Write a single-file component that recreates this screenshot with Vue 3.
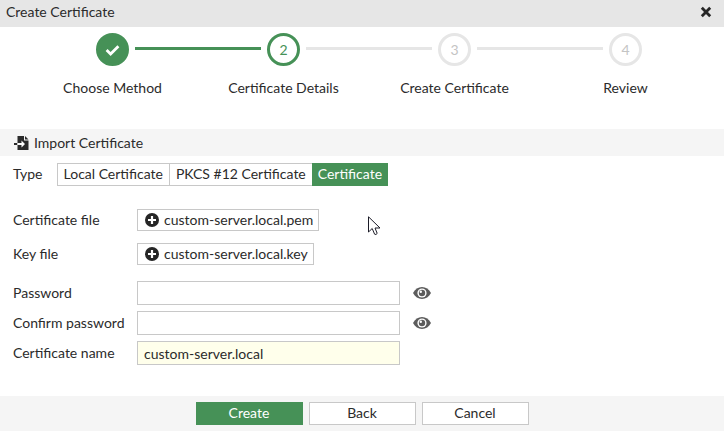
<script setup>
import { ref } from 'vue'

const steps = [
  { label: 'Choose Method', state: 'done' },
  { label: 'Certificate Details', state: 'active' },
  { label: 'Create Certificate', state: 'pending' },
  { label: 'Review', state: 'pending' },
]

const types = ['Local Certificate', 'PKCS #12 Certificate', 'Certificate']
const selectedType = ref('Certificate')

const files = [
  { id: 'cert-file', label: 'Certificate file', name: 'custom-server.local.pem' },
  { id: 'key-file', label: 'Key file', name: 'custom-server.local.key' },
]

const passwords = ref([
  { id: 'password', label: 'Password', value: '', shown: false },
  { id: 'confirm-password', label: 'Confirm password', value: '', shown: false },
])

const certName = ref('custom-server.local')
</script>

<template>
  <div class="dialog">
    <header class="titlebar">
      <h1>Create Certificate</h1>
      <button type="button" class="close" aria-label="Close">
        <svg viewBox="0 0 12 12" width="12" height="12" aria-hidden="true">
          <path d="M1.8 1.8 10.2 10.2M10.2 1.8 1.8 10.2" fill="none" stroke="#262626" stroke-width="2.8" />
        </svg>
      </button>
    </header>

    <ol class="stepper">
      <li v-for="(step, i) in steps" :key="step.label" class="step" :class="step.state">
        <div class="track">
          <span class="line" :class="{ hidden: i === 0, reached: step.state === 'active' }"></span>
          <span class="circle">
            <svg v-if="step.state === 'done'" viewBox="0 0 15 12" width="15" height="12" aria-hidden="true">
              <path d="M1.6 6 5.6 10 13.4 2.2" fill="none" stroke="#fff" stroke-width="2.8" />
            </svg>
            <template v-else>{{ i + 1 }}</template>
          </span>
          <span class="line" :class="{ hidden: i === steps.length - 1, reached: step.state === 'done' }"></span>
        </div>
        <span class="step-label">{{ step.label }}</span>
      </li>
    </ol>

    <h2 class="section">
      <svg viewBox="0 0 15 14" width="15" height="14" aria-hidden="true">
        <path d="M3.5 0H10V4.5H14.5V14H3.5Z" fill="#2b2b2b" />
        <path d="M11 0 14.5 3.6H11Z" fill="#2b2b2b" />
        <path d="M0 7H3V9H0Z" fill="#2b2b2b" />
        <path d="M3.5 7H7.5V4.6L11 8 7.5 11.4V9H3.5Z" fill="#fff" />
      </svg>
      Import Certificate
    </h2>

    <form class="form" @submit.prevent>
      <div class="type-row">
        <span id="type-label">Type</span>
        <div class="segments" role="group" aria-labelledby="type-label">
          <button
            v-for="type in types"
            :key="type"
            type="button"
            :class="{ selected: type === selectedType }"
            :aria-pressed="type === selectedType"
            @click="selectedType = type"
          >{{ type }}</button>
        </div>
      </div>

      <div class="files">
        <div v-for="file in files" :key="file.id" class="row">
          <label :for="file.id">{{ file.label }}</label>
          <button :id="file.id" type="button" class="file">
            <svg viewBox="0 0 14 14" width="14" height="14" aria-hidden="true">
              <circle cx="7" cy="7" r="7" fill="#262626" />
              <path d="M7 3V11M3 7H11" fill="none" stroke="#fff" stroke-width="2.2" />
            </svg>
            {{ file.name }}
          </button>
        </div>
      </div>

      <div class="fields">
        <div v-for="field in passwords" :key="field.id" class="row">
          <label :for="field.id">{{ field.label }}</label>
          <input :id="field.id" v-model="field.value" :type="field.shown ? 'text' : 'password'" />
          <button type="button" class="eye" aria-label="Show password" @click="field.shown = !field.shown">
            <svg viewBox="0 0 18 12" width="18" height="12" aria-hidden="true">
              <path d="M0 6C2 2.2 5.2 0 9 0S16 2.2 18 6C16 9.8 12.8 12 9 12S2 9.8 0 6Z" fill="#5c5c5c" />
              <circle cx="9" cy="6" r="4.6" fill="#fff" />
              <circle cx="9" cy="6" r="3.2" fill="#5c5c5c" />
              <circle cx="7.8" cy="4.8" r="1.2" fill="#fff" />
            </svg>
          </button>
        </div>
        <div class="row">
          <label for="cert-name">Certificate name</label>
          <input id="cert-name" v-model="certName" class="filled" type="text" />
        </div>
      </div>
    </form>

    <footer class="actions">
      <button type="button" class="primary">Create</button>
      <button type="button">Back</button>
      <button type="button">Cancel</button>
    </footer>

    <svg class="pointer" viewBox="0 0 13 20" width="13" height="20" aria-hidden="true">
      <path d="M.5 .8V16L4.2 12.5 6.6 18.2Q8 19.2 9.2 17.4L7 12H12Z" fill="#fff" stroke="#1c1c28" stroke-width="1" />
    </svg>
  </div>
</template>

<style>
body {
  margin: 0;
  background: #fff;
}
</style>

<style scoped>
.dialog {
  position: relative;
  display: flex;
  flex-direction: column;
  min-height: 100vh;
  font-family: Lato, "Liberation Sans", sans-serif;
  font-size: 14px;
  line-height: 16px;
  color: #2b2b2b;
}

button,
input {
  box-sizing: border-box;
  margin: 0;
  font: inherit;
  color: inherit;
  border: 1px solid #c8c8c8;
  border-radius: 0;
  background: #fff;
}

svg {
  display: block;
  flex: none;
}

h1,
h2 {
  margin: 0;
  font-size: 14px;
  font-weight: 400;
}

.titlebar {
  display: flex;
  align-items: center;
  justify-content: space-between;
  height: 27px;
  padding: 0 12px 3px 6px;
  box-sizing: border-box;
  background: #e6e6e6;
}

.close,
.eye {
  padding: 0;
  border: 0;
  background: none;
}

.stepper {
  display: grid;
  grid-template-columns: repeat(4, 1fr);
  margin: 0;
  padding: 6px 13px 33px 27px;
  list-style: none;
}

.step {
  display: flex;
  flex-direction: column;
  gap: 14px;
  text-align: center;
}

.track {
  display: flex;
  align-items: center;
  gap: 6px;
}

.circle {
  display: flex;
  align-items: center;
  justify-content: center;
  box-sizing: border-box;
  width: 33px;
  height: 33px;
  border: 3px solid #e6e6e6;
  border-radius: 50%;
  color: #c4c4c4;
}

.done .circle {
  border-color: #469157;
  background: #469157;
}

.active .circle {
  border-color: #469157;
  color: #469157;
}

.line {
  flex: 1;
  height: 3px;
  margin-bottom: 2px;
  background: #e6e6e6;
}

.line.reached {
  background: #469157;
}

.line.hidden {
  visibility: hidden;
}

.section {
  display: flex;
  align-items: center;
  gap: 5px;
  height: 27px;
  padding: 0 14px;
  background: #f5f5f5;
}

.form {
  padding: 7px 13px 30px;
}

.type-row {
  display: flex;
  align-items: baseline;
  gap: 14px;
}

.segments {
  display: flex;
}

.segments button {
  height: 23px;
  padding: 0 6px 1px;
}

.segments button + button {
  margin-left: -1px;
}

.segments button.selected {
  padding: 0 5px 1px;
  border-color: #469157;
  background: #469157;
  color: #fff;
}

.files {
  display: flex;
  flex-direction: column;
  gap: 12px;
  padding: 23px 0 16px;
}

.row {
  display: flex;
  align-items: center;
}

.row label {
  flex: none;
  width: 124px;
}

.file {
  display: flex;
  align-items: center;
  gap: 5px;
  height: 22px;
  padding: 0 5px 0 7px;
}

.fields {
  display: flex;
  flex-direction: column;
  gap: 6px;
}

.fields input {
  flex: 0 1 263px;
  min-width: 0;
  height: 24px;
  padding: 0 6px;
}

.fields .filled {
  background: #ffffeb;
}

.eye {
  margin-left: 13px;
}

.actions {
  display: flex;
  justify-content: center;
  gap: 6px;
  margin-top: auto;
  padding: 6px;
  background: #f5f5f5;
}

.actions button {
  width: 107px;
  height: 23px;
  padding: 0 0 1px;
}

.actions .primary {
  border-color: #469157;
  background: #469157;
  color: #fff;
}

.pointer {
  position: absolute;
  left: 368px;
  top: 216px;
  pointer-events: none;
}
</style>
